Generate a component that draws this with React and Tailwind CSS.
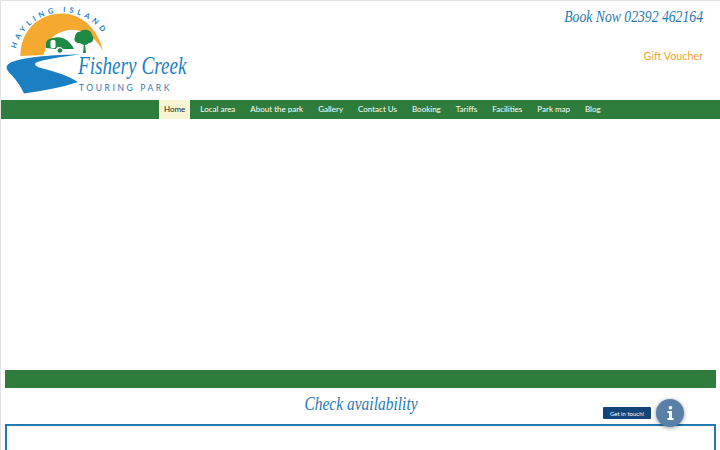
import React from 'react';

const links = ['Local area', 'About the park', 'Gallery', 'Contact Us', 'Booking', 'Tariffs', 'Facilities', 'Park map', 'Blog'];

function Logo() {
  return (
    <svg width="190" height="98" viewBox="0 0 190 98" className="block">
      <defs>
        <path id="arc" d="M15 48 C22 22 45 11 62 11 C78 11 94 20 103 34" fill="none" />
      </defs>
      {/* sun */}
      <path d="M19.500 55 C19 30 38 12 62 12.500 C82 13 98 30 102 50.500 C96 37 82 27 68 29 C55 31 46 38 44 50 L42 54 Z" fill="#f5a92f" />
      {/* caravan */}
      <path d="M45 47 L45 42 C46 38 50 37 55 36.500 C62 35.500 69 40 73 48 L61 48 C60 45 56 45 55 48 Z" fill="#1f8a44" />
      <rect x="49.500" y="39" width="5" height="8" rx="1.500" fill="#fff" />
      <circle cx="59" cy="49.500" r="2.800" fill="#1f8a44" stroke="#fff" strokeWidth="1" />
      {/* tree */}
      <path d="M82 52 L83 42 L79 38 L80 37 L83.500 40 L85 52 Z" fill="#1f8a44" />
      <path d="M83 29 C87 28 91 31 91 34 C94 37 92 42 88 42 C85 45 81 44 79 42 C75 43 72 39 74 36 C74 32 78 30 79 31 C80 29 82 29 83 29 Z" fill="#1f8a44" />
      {/* river */}
      <path d="M80 53.500 C60 53.500 30 55 14 60 C6 62 4 66 7 70 C11 75 18 81 23 92.500 C40 90 60 87 77 81 C66 74 52 70 40 67 C33 65 32 62 38 60.500 C50 57 66 55 80 53.500 Z" fill="#1b7fc4" />
      <text fontFamily="Lato, sans-serif" fontSize="7.500" fontWeight="700" letterSpacing="3.700" fill="#1b7fc4">
        <textPath href="#arc">HAYLING ISLAND</textPath>
      </text>
      <text transform="translate(77 73) scale(1 1.300)" fontFamily="'Liberation Serif', serif" fontStyle="italic" fontSize="19.200" fill="#1b7fc4">Fishery Creek</text>
      <text x="78" y="90" fontFamily="Lato, sans-serif" fontSize="8.500" letterSpacing="2.600" fill="#2a78ae">TOURING PARK</text>
    </svg>
  );
}

export default function App() {
  return (
    <div className="relative h-[450px] w-[720px] overflow-hidden border-l border-t border-[#e2e2e2] bg-white font-['Lato',sans-serif]">
      <header className="flex h-[99px] justify-between pr-[17px]">
        <Logo />
        <div className="flex flex-col items-end">
          <a className="mt-[4px] origin-center scale-y-125 font-['Liberation_Serif',serif] text-[13.700px] italic leading-[24px] text-[#1f7ab5]">Book Now 02392 462164</a>
          <a className="mt-[19px] text-[10.750px] leading-[16px] text-[#eda532]">Gift Voucher</a>
        </div>
      </header>

      <nav className="flex h-[19px] items-stretch gap-[5px] bg-[#2e7d3d] pl-[158px] text-[8px] leading-[19px] text-white">
        <a className="bg-[#f8f6d4] px-[5px] text-[#1c1c1c]">Home</a>
        {links.map((l) => (
          <a key={l} className="px-[5px]">{l}</a>
        ))}
      </nav>

      <main className="px-[4px] pt-[251px]">
        <div className="h-[18px] bg-[#2e7d3d]" />
        <h2 className="h-[36px] origin-center scale-y-125 pl-[1px] pt-[1px] text-center font-['Liberation_Serif',serif] text-[15.500px] italic leading-[30px] text-[#1f7ab5]">Check availability</h2>
        <div className="h-[100px] border-2 border-[#2479b0]" />
      </main>

      <div className="absolute left-[602px] top-[406px] flex h-[12px] w-[48px] items-center justify-center rounded-[1px] bg-[#13447a] text-[6px] text-white">Get in touch!</div>
      <div className="absolute left-[655px] top-[398px] flex h-[28px] w-[28px] items-center justify-center rounded-full bg-[#5b80a8] shadow-[0_1px_4px_rgba(0,0,0,0.4)]">
        <svg width="7" height="14" viewBox="0 0 7 14" fill="#fff">
          <circle cx="3.500" cy="1.800" r="1.800" />
          <path d="M0.500 5 H5 V12 H6.500 V14 H0.500 V12 H2 V7 H0.500 Z" />
        </svg>
      </div>
    </div>
  );
}
